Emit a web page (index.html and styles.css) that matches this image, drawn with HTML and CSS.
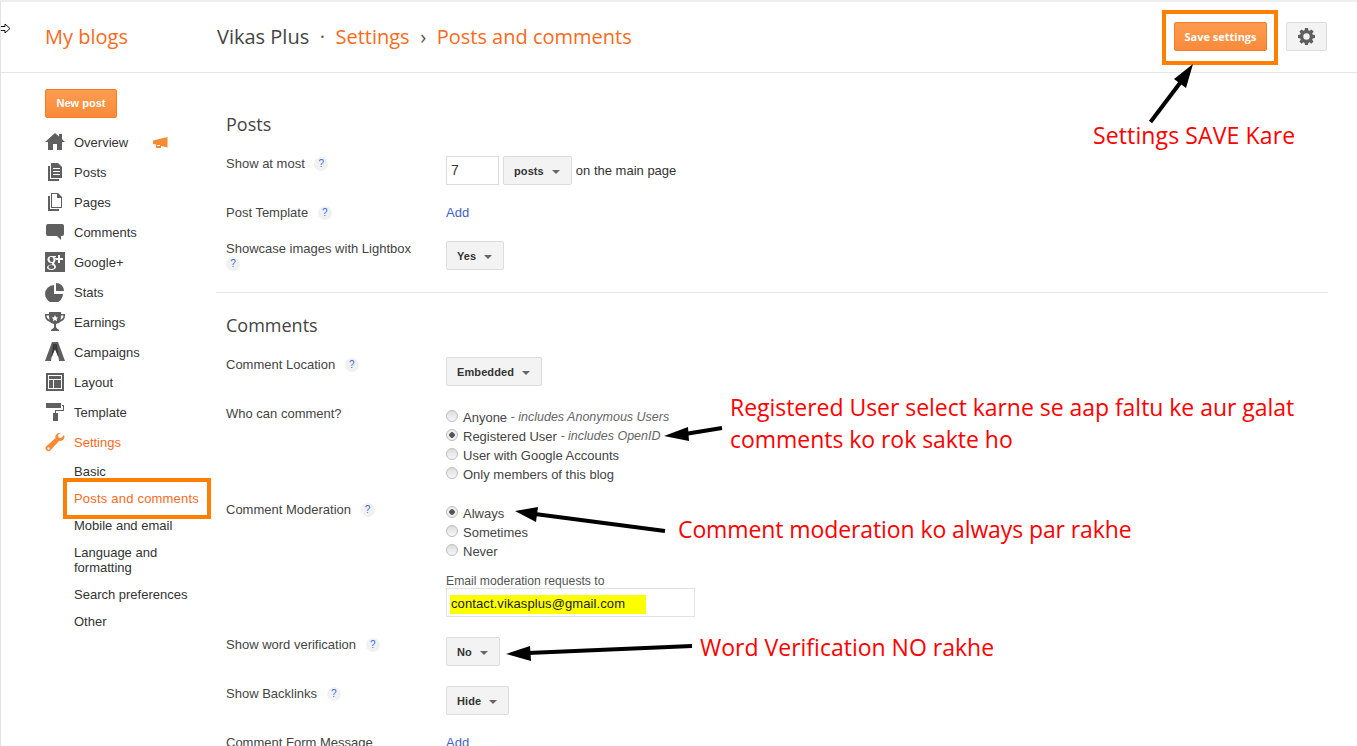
FILE: index.html
```html
<!DOCTYPE html>
<html lang="en">
<head>
  <meta charset="UTF-8" />
  <title>Posts and comments</title>
  <link rel="stylesheet" href="styles.css">
</head>
<body>
  <header class="topbar">
    <a class="my-blogs">My blogs</a>
    <div class="crumbs">
      <span class="blog-name">Vikas Plus</span>
      <span class="dot">·</span>
      <a>Settings</a>
      <span class="sep">›</span>
      <a>Posts and comments</a>
    </div>
    <div class="top-actions">
      <button class="btn-orange save">Save settings</button>
      <button class="gear-btn">
        <svg width="17" height="17" viewBox="0 0 18 18"><path fill="#5f5f5f" fill-rule="evenodd" d="M7.4 0h3.2l.4 2.4 1.3.6 2-1.4 2.2 2.2-1.4 2 .6 1.3 2.3.4v3.2l-2.4.4-.6 1.3 1.4 2-2.2 2.2-2-1.4-1.3.6-.3 2.2H7.4L7 15.800l-1.300-.6-2 1.400-2.200-2.200 1.400-2-.6-1.300L0 10.600V7.400l2.300-.4.6-1.300-1.400-2 2.200-2.200 2 1.400L7 2.300zM9 5.600a3.400 3.400 0 1 0 0 6.800 3.400 3.400 0 0 0 0-6.800z"/></svg>
      </button>
    </div>
  </header>

  <div class="layout">
    <nav class="sidebar">
      <button class="btn-orange new-post">New post</button>
      <ul class="menu">
        <li><svg class="ico" viewBox="0 0 20 20"><path d="M10 1 0 10h3v8h5v-6h4v6h5v-8h3l-3-2.700V2h-3v2.600z"/></svg>Overview
          <svg class="megaphone" width="15" height="11" viewBox="0 0 15 11"><path fill="#f98a32" d="M0 3.500 14.500 0v10.500L8 9v2H3V7.500L0 7z"/><path fill="#fff" d="M4 8h3v1H4z"/></svg></li>
        <li><svg class="ico" viewBox="0 0 20 20"><path d="M6 1h7l4 4v11H6zM8 6v1h7V6zm0 3v1h7V9zm0 3v1h7v-1z"/><path d="M3 4h2v13h9v2H3z"/></svg>Posts</li>
        <li><svg class="ico" viewBox="0 0 20 20"><path fill-rule="evenodd" d="M6 1h7l4 4v11H6zm1 1v13h9V6h-4V2z"/><path d="M3 4h2v13h9v2H3z"/></svg>Pages</li>
        <li><svg class="ico" viewBox="0 0 20 20"><path d="M3 2h14q2 0 2 2v8q0 2-2 2h-1v4l-4-4H3q-2 0-2-2V4q0-2 2-2z"/></svg>Comments</li>
        <li><svg class="ico" viewBox="0 0 20 20"><path fill-rule="evenodd" d="M0 0h20v20H0zm13 3v3h-3v2h3v3h2V8h3V6h-3V3zM6.500 4C4 4 2.500 5.500 2.500 7.500S4 11 6.300 11h.7c-.3 1 .3 1.300.3 1.500C4 12.500 2 14 2 15.500S4 18 6.500 18 11 16.500 11 14.800c0-2-2-2.500-2-3.500 0-.8 1.500-1.300 1.500-3.300 0-1.500-1-2.500-1-2.500L11 5V4zm0 1c1.200 0 2 1.200 2 3s-.8 2-1.800 2-2.200-1-2.200-3 1-2 2-2zM6.500 13c1.700 0 2.800.8 2.800 2s-1 2-2.800 2-3-.9-3-2 1.300-2 3-2z"/></svg>Google+</li>
        <li><svg class="ico" viewBox="0 0 20 20"><path d="M9 3v9h9a9 9 0 1 1-9-9z"/><path d="M11 1a8 8 0 0 1 8 8h-8z"/></svg>Stats</li>
        <li><svg class="ico" viewBox="0 0 20 20"><path fill-rule="evenodd" d="M4 0h12v2h4v2c0 3-2 5-5 6-1 1-2 1.500-4 2v3c0 1 2 2 3 3v1H6v-1c1-1 3-2 3-3v-3c-2-.5-3-1-4-2-3-1-5-3-5-6V2h4zM1.500 3.500c0 2 1 3.500 3 4.300C4 6.500 4 5 4 3.500zm17 0H16c0 1.500 0 3-.5 4.300 2-.8 3-2.300 3-4.300zM10 3 9 5.200l-2.300.2 1.700 1.600-.5 2.300L10 8.100l2.100 1.200-.5-2.300 1.700-1.600-2.300-.2z"/></svg>Earnings</li>
        <li><svg class="ico" viewBox="0 0 20 20"><path d="M7 0h6l7 19h-5l-5-12-5 12H0z"/><path fill="#3a3a3a" d="M8 2h4l2 17h1L10 7 5 19h1z"/></svg>Campaigns</li>
        <li><svg class="ico" viewBox="0 0 20 20"><path fill-rule="evenodd" d="M1 1h18v18H1zm2 2v14h14V3zm1 1h12v3H4zm0 4h4v8H4zm5 0h7v8H9z"/></svg>Layout</li>
        <li><svg class="ico" viewBox="0 0 20 20"><path d="M1 1h15v5H1zM17 3h2v6h-8v2h2v8H8v-8h2V8h8V4h-1z"/></svg>Template</li>
        <li class="active"><svg class="ico" viewBox="0 0 20 20"><path d="M15 1c-3 0-5 2-4.500 5L1 14.500C0 16 .5 17.500 1.500 18.500s2.700 1 3.800 0L14 9c3 .5 5.500-1.500 5.500-4.500L19 3l-3 3-2.500-.5L13 3l3-2.500zM3.500 15.300a1.200 1.200 0 1 1 0 2.400 1.200 1.200 0 0 1 0-2.400z"/></svg>Settings</li>
      </ul>
      <ul class="submenu">
        <li>Basic</li>
        <li class="active">Posts and comments</li>
        <li>Mobile and email</li>
        <li>Language and formatting</li>
        <li>Search preferences</li>
        <li>Other</li>
      </ul>
    </nav>

    <main class="content">
      <section class="group">
        <h2>Posts</h2>
        <div class="row show-most">
          <div class="label">Show at most <span class="help">?</span></div>
          <div class="field inline">
            <span class="text-input">7</span>
            <button class="select">posts</button>
            <span>on the main page</span>
          </div>
        </div>
        <div class="row post-template">
          <div class="label">Post Template <span class="help">?</span></div>
          <div class="field"><a class="link">Add</a></div>
        </div>
        <div class="row lightbox">
          <div class="label">Showcase images with Lightbox <span class="help wrapped">?</span></div>
          <div class="field"><button class="select">Yes</button></div>
        </div>
      </section>

      <section class="group comments">
        <h2>Comments</h2>
        <div class="row location">
          <div class="label">Comment Location <span class="help">?</span></div>
          <div class="field"><button class="select">Embedded</button></div>
        </div>
        <div class="row who">
          <div class="label">Who can comment?</div>
          <div class="field radios">
            <label><i class="radio"></i>Anyone <em>- includes Anonymous Users</em></label>
            <label><i class="radio on"></i>Registered User <em>- includes OpenID</em></label>
            <label><i class="radio"></i>User with Google Accounts</label>
            <label><i class="radio"></i>Only members of this blog</label>
          </div>
        </div>
        <div class="row moderation">
          <div class="label">Comment Moderation <span class="help">?</span></div>
          <div class="field">
            <div class="radios">
              <label><i class="radio on"></i>Always</label>
              <label><i class="radio"></i>Sometimes</label>
              <label><i class="radio"></i>Never</label>
            </div>
            <div class="mail-label">Email moderation requests to</div>
            <div class="mail-input"><mark>contact.vikasplus@gmail.com</mark></div>
          </div>
        </div>
        <div class="row verification">
          <div class="label">Show word verification <span class="help">?</span></div>
          <div class="field"><button class="select">No</button></div>
        </div>
        <div class="row backlinks">
          <div class="label">Show Backlinks <span class="help">?</span></div>
          <div class="field"><button class="select">Hide</button></div>
        </div>
        <div class="row form-message">
          <div class="label">Comment Form Message</div>
          <div class="field"><a class="link">Add</a></div>
        </div>
      </section>
    </main>
  </div>

  <!-- annotations drawn on top of the screenshot -->
  <div class="box box-save"></div>
  <div class="box box-posts"></div>
  <svg class="arrows" width="1357" height="746" viewBox="0 0 1357 746">
    <path d="M1150.500 122 1180 83" class="shaft"/>
    <path d="M1193 64 1186 88 1174 79z"/>
    <path d="M722 428 685 434" class="shaft"/>
    <path d="M664 436 688 427 689 441z"/>
    <path d="M665 531 535 514" class="shaft"/>
    <path d="M515 511 538 507 536 522z"/>
    <path d="M692 646 528 653" class="shaft"/>
    <path d="M506 654 530 646 531 661z"/>
  </svg>
  <p class="note note-save">Settings SAVE Kare</p>
  <p class="note note-registered">Registered User select karne se aap faltu ke aur galat<br>comments ko rok sakte ho</p>
  <p class="note note-moderation">Comment moderation ko always par rakhe</p>
  <p class="note note-word">Word Verification NO rakhe</p>
  <svg class="cursor" width="11" height="11" viewBox="0 0 11 11"><path fill="#fff" stroke="#111" d="M0 3.500h5V1l5 4.500L5 10V7.500H0z"/></svg>
</body>
</html>
```

FILE: styles.css
```css
html, body {
  height: 746px;
  overflow: hidden;
}
body {
  position: relative;
  margin: 0;
  box-sizing: border-box;
  border-top: 2px solid #eeeeee;
  border-left: 1px solid #e2e2e2;
  background: #fff;
  font-family: "Liberation Sans", Arial, sans-serif;
  font-size: 13px;
  color: #333;
}
a { color: #f96a1b; }
button { font-family: inherit; }

.topbar {
  display: flex;
  align-items: center;
  height: 68px;
  padding: 0 0 2px 44px;
  border-bottom: 1px solid #e5e5e5;
  font-family: "Open Sans", sans-serif;
  font-size: 20px;
}
.my-blogs {
  width: 172px;
}
.crumbs {
  display: flex;
  gap: 10.500px;
}
.blog-name { color: #444; }
.dot { color: #555; }
.sep { color: #555; }
.top-actions {
  display: flex;
  align-items: center;
  gap: 19px;
  margin-left: auto;
  margin-right: 30px;
}

.btn-orange {
  border: 1px solid #f57c25;
  border-radius: 2px;
  background: linear-gradient(#ff9c50, #f98a3a);
  color: #fff;
  font-size: 11px;
  font-weight: bold;
  padding: 0;
}
.save { width: 93px; height: 29px; }
.gear-btn {
  display: flex;
  align-items: center;
  justify-content: center;
  width: 41px;
  height: 29px;
  padding: 0;
  border: 1px solid #dcdcdc;
  border-radius: 2px;
  background: #f3f3f3;
}

.layout { display: flex; }
.sidebar {
  width: 127px;
  padding: 16px 44px 0;
  flex: none;
}
.new-post {
  width: 72px;
  height: 29px;
  padding-bottom: 1px;
}
.menu, .submenu {
  list-style: none;
  margin: 0;
  padding: 0;
}
.menu { margin-top: 9px; }
.menu li {
  display: flex;
  align-items: center;
  height: 30px;
  color: #333;
}
.ico {
  width: 20px;
  height: 20px;
  margin-right: 9px;
  fill: #5f5f5f;
  flex: none;
}
.megaphone { margin-left: 25px; }
.menu .active { color: #f96a1b; }
.menu .active .ico { fill: #f98a32; }
.submenu {
  margin-top: 1px;
  padding-left: 29px;
}
.submenu li {
  width: 126px;
  line-height: 15px;
  padding: 6px 0;
}
.submenu .active {
  color: #f96a1b;
  letter-spacing: .2px;
  white-space: nowrap;
}

.content {
  flex: 1;
  margin-right: 29px;
}
.group { padding-left: 10px; }
h2 {
  margin: 0;
  font-family: "Open Sans", sans-serif;
  font-weight: normal;
  font-size: 18px;
  line-height: 24px;
  color: #444;
}
.group:first-child { padding-top: 39px; }
.comments {
  margin-top: 21px;
  padding-top: 20px;
  border-top: 1px solid #e5e5e5;
}

.row { display: flex; }
.label {
  box-sizing: border-box;
  width: 220px;
  flex: none;
  padding-right: 20px;
  line-height: 15px;
  color: #444;
}
.help {
  display: inline-block;
  vertical-align: top;
  width: 14px;
  height: 14px;
  margin: 1px 0 0 6px;
  border-radius: 50%;
  background: #f1f1f1;
  color: #3b6ee0;
  font-size: 10px;
  line-height: 14px;
  text-align: center;
}
.help.wrapped { margin-left: 0; }
.field { line-height: 15px; }
.inline {
  display: flex;
  align-items: center;
  gap: 4px;
}
.text-input {
  box-sizing: border-box;
  width: 53px;
  height: 29px;
  border: 1px solid #dcdcdc;
  padding: 0 4px;
  line-height: 27px;
  font-size: 14px;
}
.select {
  height: 29px;
  padding: 0 11px 0 10px;
  border: 1px solid #dcdcdc;
  border-radius: 2px;
  background: #f3f3f3;
  color: #333;
  font-size: 11px;
  font-weight: bold;
  letter-spacing: .1px;
}
.select::after {
  content: "";
  display: inline-block;
  margin-left: 8px;
  vertical-align: 1px;
  border: 4px solid transparent;
  border-top-color: #666;
  border-bottom: 0;
}
.link { color: #3f5fc7; }

.show-most { margin-top: 20px; }
.post-template { margin-top: 20px; }
.lightbox { margin-top: 21px; }
.location { margin-top: 20px; }
.who { margin-top: 20px; }
.moderation { margin-top: 18px; }
.verification { margin-top: 20px; }
.backlinks { margin-top: 20px; }
.form-message { margin-top: 20px; }

.radios { padding-top: 2px; }
.radios label {
  display: flex;
  align-items: center;
  height: 19px;
  color: #444;
}
.radio {
  box-sizing: border-box;
  width: 12px;
  height: 12px;
  margin: -3px 5px 0 0;
  border: 1px solid #bdbdbd;
  border-radius: 50%;
  background: linear-gradient(#dcdcdc, #f8f8f8);
}
.radio.on { background: radial-gradient(circle, #555 0 2.500px, #eee 3px); }
em {
  margin-left: 3.500px;
  color: #666;
  font-size: 12.500px;
}
.mail-label {
  margin-top: 13px;
  color: #555;
  font-size: 12.200px;
  line-height: 14px;
}
.mail-input {
  box-sizing: border-box;
  width: 249px;
  height: 29px;
  padding: 6px 3px;
  border: 1px solid #e2e2e2;
  color: #222;
}
mark {
  display: block;
  width: 195px;
  height: 19px;
  padding-left: 1px;
  line-height: 17px;
  letter-spacing: .1px;
  background: #ffff00;
  color: #222;
}

/* annotations */
.box {
  position: absolute;
  box-sizing: border-box;
  border: 4px solid #ff8000;
}
.box-save {
  left: 1161px;
  top: 8px;
  width: 116px;
  height: 55px;
}
.box-posts {
  left: 62px;
  top: 476px;
  width: 148px;
  height: 41px;
}
.arrows {
  position: absolute;
  left: -1px;
  top: -2px;
}
.shaft {
  stroke: #000;
  stroke-width: 4;
  fill: none;
}
.note {
  position: absolute;
  margin: 0;
  font-family: "Open Sans", sans-serif;
  font-size: 23px;
  line-height: 32px;
  color: #ff0000;
  white-space: nowrap;
}
.note-save { left: 1092px; top: 117px; letter-spacing: .12px; }
.note-registered { left: 729px; top: 389px; letter-spacing: -.04px; }
.note-moderation { left: 677px; top: 511px; letter-spacing: -.1px; }
.note-word { left: 699px; top: 629px; }
.cursor {
  position: absolute;
  left: -1px;
  top: 21px;
}
```
